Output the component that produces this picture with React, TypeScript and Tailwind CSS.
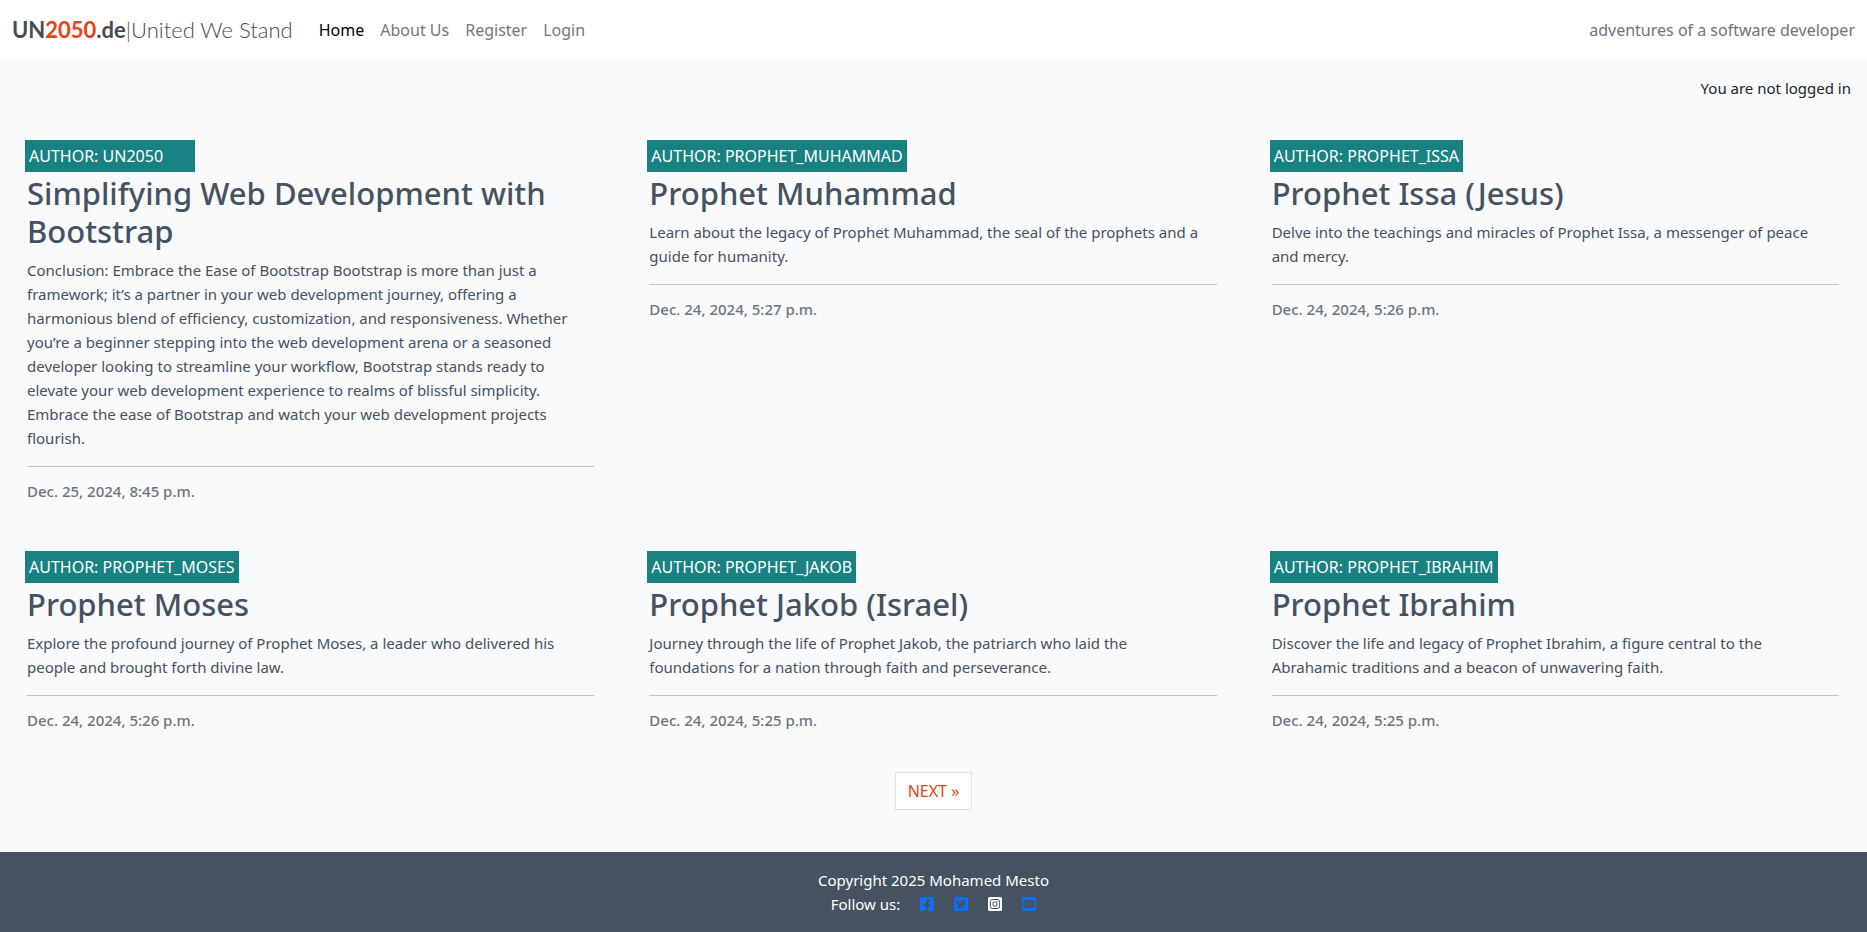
import React from "react";
import {
  FaFacebookSquare,
  FaInstagramSquare,
  FaTwitterSquare,
  FaYoutubeSquare,
} from "react-icons/fa";

type Post = { author: string; title: string; text: string; date: string };

const posts: Post[] = [
  {
    author: "UN2050",
    title: "Simplifying Web Development with Bootstrap",
    text: "Conclusion: Embrace the Ease of Bootstrap Bootstrap is more than just a framework; it’s a partner in your web development journey, offering a harmonious blend of efficiency, customization, and responsiveness. Whether you’re a beginner stepping into the web development arena or a seasoned developer looking to streamline your workflow, Bootstrap stands ready to elevate your web development experience to realms of blissful simplicity. Embrace the ease of Bootstrap and watch your web development projects flourish.",
    date: "Dec. 25, 2024, 8:45 p.m.",
  },
  {
    author: "PROPHET_MUHAMMAD",
    title: "Prophet Muhammad",
    text: "Learn about the legacy of Prophet Muhammad, the seal of the prophets and a guide for humanity.",
    date: "Dec. 24, 2024, 5:27 p.m.",
  },
  {
    author: "PROPHET_ISSA",
    title: "Prophet Issa (Jesus)",
    text: "Delve into the teachings and miracles of Prophet Issa, a messenger of peace and mercy.",
    date: "Dec. 24, 2024, 5:26 p.m.",
  },
  {
    author: "PROPHET_MOSES",
    title: "Prophet Moses",
    text: "Explore the profound journey of Prophet Moses, a leader who delivered his people and brought forth divine law.",
    date: "Dec. 24, 2024, 5:26 p.m.",
  },
  {
    author: "PROPHET_JAKOB",
    title: "Prophet Jakob (Israel)",
    text: "Journey through the life of Prophet Jakob, the patriarch who laid the foundations for a nation through faith and perseverance.",
    date: "Dec. 24, 2024, 5:25 p.m.",
  },
  {
    author: "PROPHET_IBRAHIM",
    title: "Prophet Ibrahim",
    text: "Discover the life and legacy of Prophet Ibrahim, a figure central to the Abrahamic traditions and a beacon of unwavering faith.",
    date: "Dec. 24, 2024, 5:25 p.m.",
  },
];

const navLinks = ["Home", "About Us", "Register", "Login"];

const socials = [
  { name: "Facebook", Icon: FaFacebookSquare, color: "text-[#0d6efd]" },
  { name: "Twitter", Icon: FaTwitterSquare, color: "text-[#0d6efd]" },
  { name: "Instagram", Icon: FaInstagramSquare, color: "text-white" },
  { name: "YouTube", Icon: FaYoutubeSquare, color: "text-[#0d6efd]" },
];

function PostCard({ post }: { post: Post }) {
  return (
    <article className="pr-7 pl-[27px] text-[#445261]">
      <p className="-ml-0.5 w-fit min-w-[170px] bg-[#188181] p-1 text-[16px] text-white">
        AUTHOR: {post.author}
      </p>
      <h2 className="mb-2 pt-0.5 text-[31px] leading-[38px] font-medium">
        <a href="#">{post.title}</a>
      </h2>
      <p className="pr-2">{post.text}</p>
      <hr className="mt-4 mb-3 border-[#c1c4c7]" />
      <p className="pb-10 font-medium text-[#6c757d]">{post.date}</p>
    </article>
  );
}

export default function App() {
  return (
    <div className="flex min-h-screen flex-col bg-[#f9fafc] font-['Noto_Sans',sans-serif] text-[15px] leading-6 text-[#212529]">
      <header className="flex h-15 items-center bg-white px-3 text-[16px]">
        <a
          href="#"
          className="mr-[26px] font-['Lato',sans-serif] text-[22px] leading-8 font-light whitespace-nowrap text-[#4b4b55]"
        >
          <b className="font-bold text-[#484b50]">
            UN<span className="text-[#e8430f]">2050</span>.de
          </b>
          |United We Stand
        </a>
        <nav className="flex gap-4">
          {navLinks.map((label) => (
            <a
              key={label}
              href="#"
              className={label === "Home" ? "text-black" : "text-[#75777a]"}
            >
              {label}
            </a>
          ))}
        </nav>
        <span className="ml-auto text-[#6c757d]">
          adventures of a software developer
        </span>
      </header>

      <main className="grow">
        <p className="px-4 pt-4 text-right">You are not logged in</p>
        <section className="grid grid-cols-3 gap-y-2 pt-10">
          {posts.map((post) => (
            <PostCard key={post.title} post={post} />
          ))}
        </section>
        <nav className="flex justify-center pb-10" aria-label="Pagination">
          <a
            href="#"
            className="border border-[#dee2e6] bg-white px-3 py-1.5 text-[16px] text-[#e8430f]"
          >
            NEXT »
          </a>
        </nav>
      </main>

      <footer className="bg-[#445261] py-4 text-center text-white">
        <p>Copyright 2025 Mohamed Mesto</p>
        <div className="flex items-center justify-center">
          <span>Follow us:</span>
          {socials.map(({ name, Icon, color }) => (
            <a key={name} href="#" aria-label={name} className={`ml-5 ${color}`}>
              <Icon className="h-4 w-3.5" />
            </a>
          ))}
        </div>
      </footer>
    </div>
  );
}
